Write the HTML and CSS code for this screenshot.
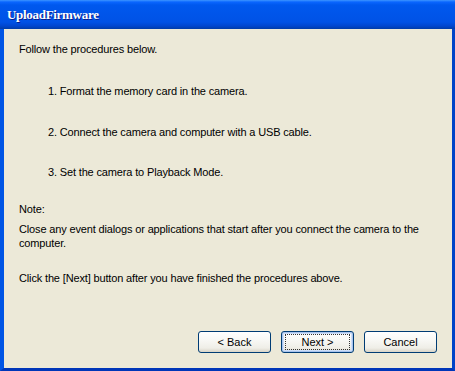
FILE: index.html
```html
<!DOCTYPE html>
<html>
<head>
<meta charset="utf-8">
<link rel="stylesheet" href="styles.css">
</head>
<body>
<div class="window">
  <div class="titlebar"><span class="title">UploadFirmware</span></div>
  <div class="frame">
    <div class="content">
      <div class="line l1">Follow the procedures below.</div>
      <div class="line step l2">1. Format the memory card in the camera.</div>
      <div class="line step l3">2. Connect the camera and computer with a USB cable.</div>
      <div class="line step l4">3. Set the camera to Playback Mode.</div>
      <div class="line l5">Note:</div>
      <div class="line l6">Close any event dialogs or applications that start after you connect the camera to the computer.</div>
      <div class="line l7">Click the [Next] button after you have finished the procedures above.</div>
      <div class="buttons">
        <button class="btn">&lt; Back</button>
        <button class="btn default"><span class="focus">Next &gt;</span></button>
        <button class="btn">Cancel</button>
      </div>
    </div>
  </div>
</div>
</body>
</html>
```
FILE: styles.css
```css
html, body {
  margin: 0;
  padding: 0;
  background: #ece9d8;
}
.window {
  width: 455px;
  height: 371px;
  display: flex;
  flex-direction: column;
  overflow: hidden;
}
.titlebar {
  height: 29px;
  box-sizing: border-box;
  background: linear-gradient(to bottom, #3d95ff 0px, #0a66ff 2px, #0058ee 5px, #0055ea 14px, #0052e6 22px, #0046cf 26px, #003ca8 29px);
  display: flex;
  align-items: center;
  padding-left: 7px;
  flex: none;
}
.title {
  font-family: "Liberation Serif", "DejaVu Serif", serif;
  font-weight: bold;
  font-size: 13px;
  letter-spacing: -0.3px;
  color: #fff;
  text-shadow: 1px 1px 0 #0a1e8c;
  margin-top: 1px;
}
.frame {
  flex: 1;
  display: flex;
  border-left: 4px solid #0055e5;
  border-right: 3px solid #0044c8;
  border-bottom: 3px solid #0036b8;
  background: #ece9d8;
}
.content {
  flex: 1;
  display: flex;
  flex-direction: column;
  padding: 13px 15px 15px 15px;
  font-family: "Liberation Sans", Arial, sans-serif;
  font-size: 11px;
  line-height: 14px;
  letter-spacing: -0.15px;
  color: #000;
}
.step { padding-left: 29px; }
.l2 { margin-top: 28px; }
.l3 { margin-top: 27px; }
.l4 { margin-top: 26px; }
.l5 { margin-top: 23px; }
.l6 { margin-top: 6px; }
.l7 { margin-top: 21px; }
.buttons {
  margin-top: auto;
  display: flex;
  justify-content: flex-end;
  gap: 10px;
}
.btn {
  width: 73px;
  height: 22px;
  box-sizing: border-box;
  border: 1px solid #003c74;
  border-radius: 3px;
  background: linear-gradient(to bottom, #ffffff 0%, #f8f8f5 40%, #efeee7 80%, #d8d4c7 100%);
  font-family: "Liberation Sans", Arial, sans-serif;
  font-size: 11px;
  color: #000;
  padding: 0;
  display: flex;
  align-items: center;
  justify-content: center;
}
.btn.default {
  box-shadow: inset 0 0 0 1px #a8c4ee, inset 0 0 0 2px #cfdff8;
}
.focus {
  display: flex;
  align-items: center;
  justify-content: center;
  width: 63px;
  height: 14px;
  outline: 1px dotted #333;
}
```
